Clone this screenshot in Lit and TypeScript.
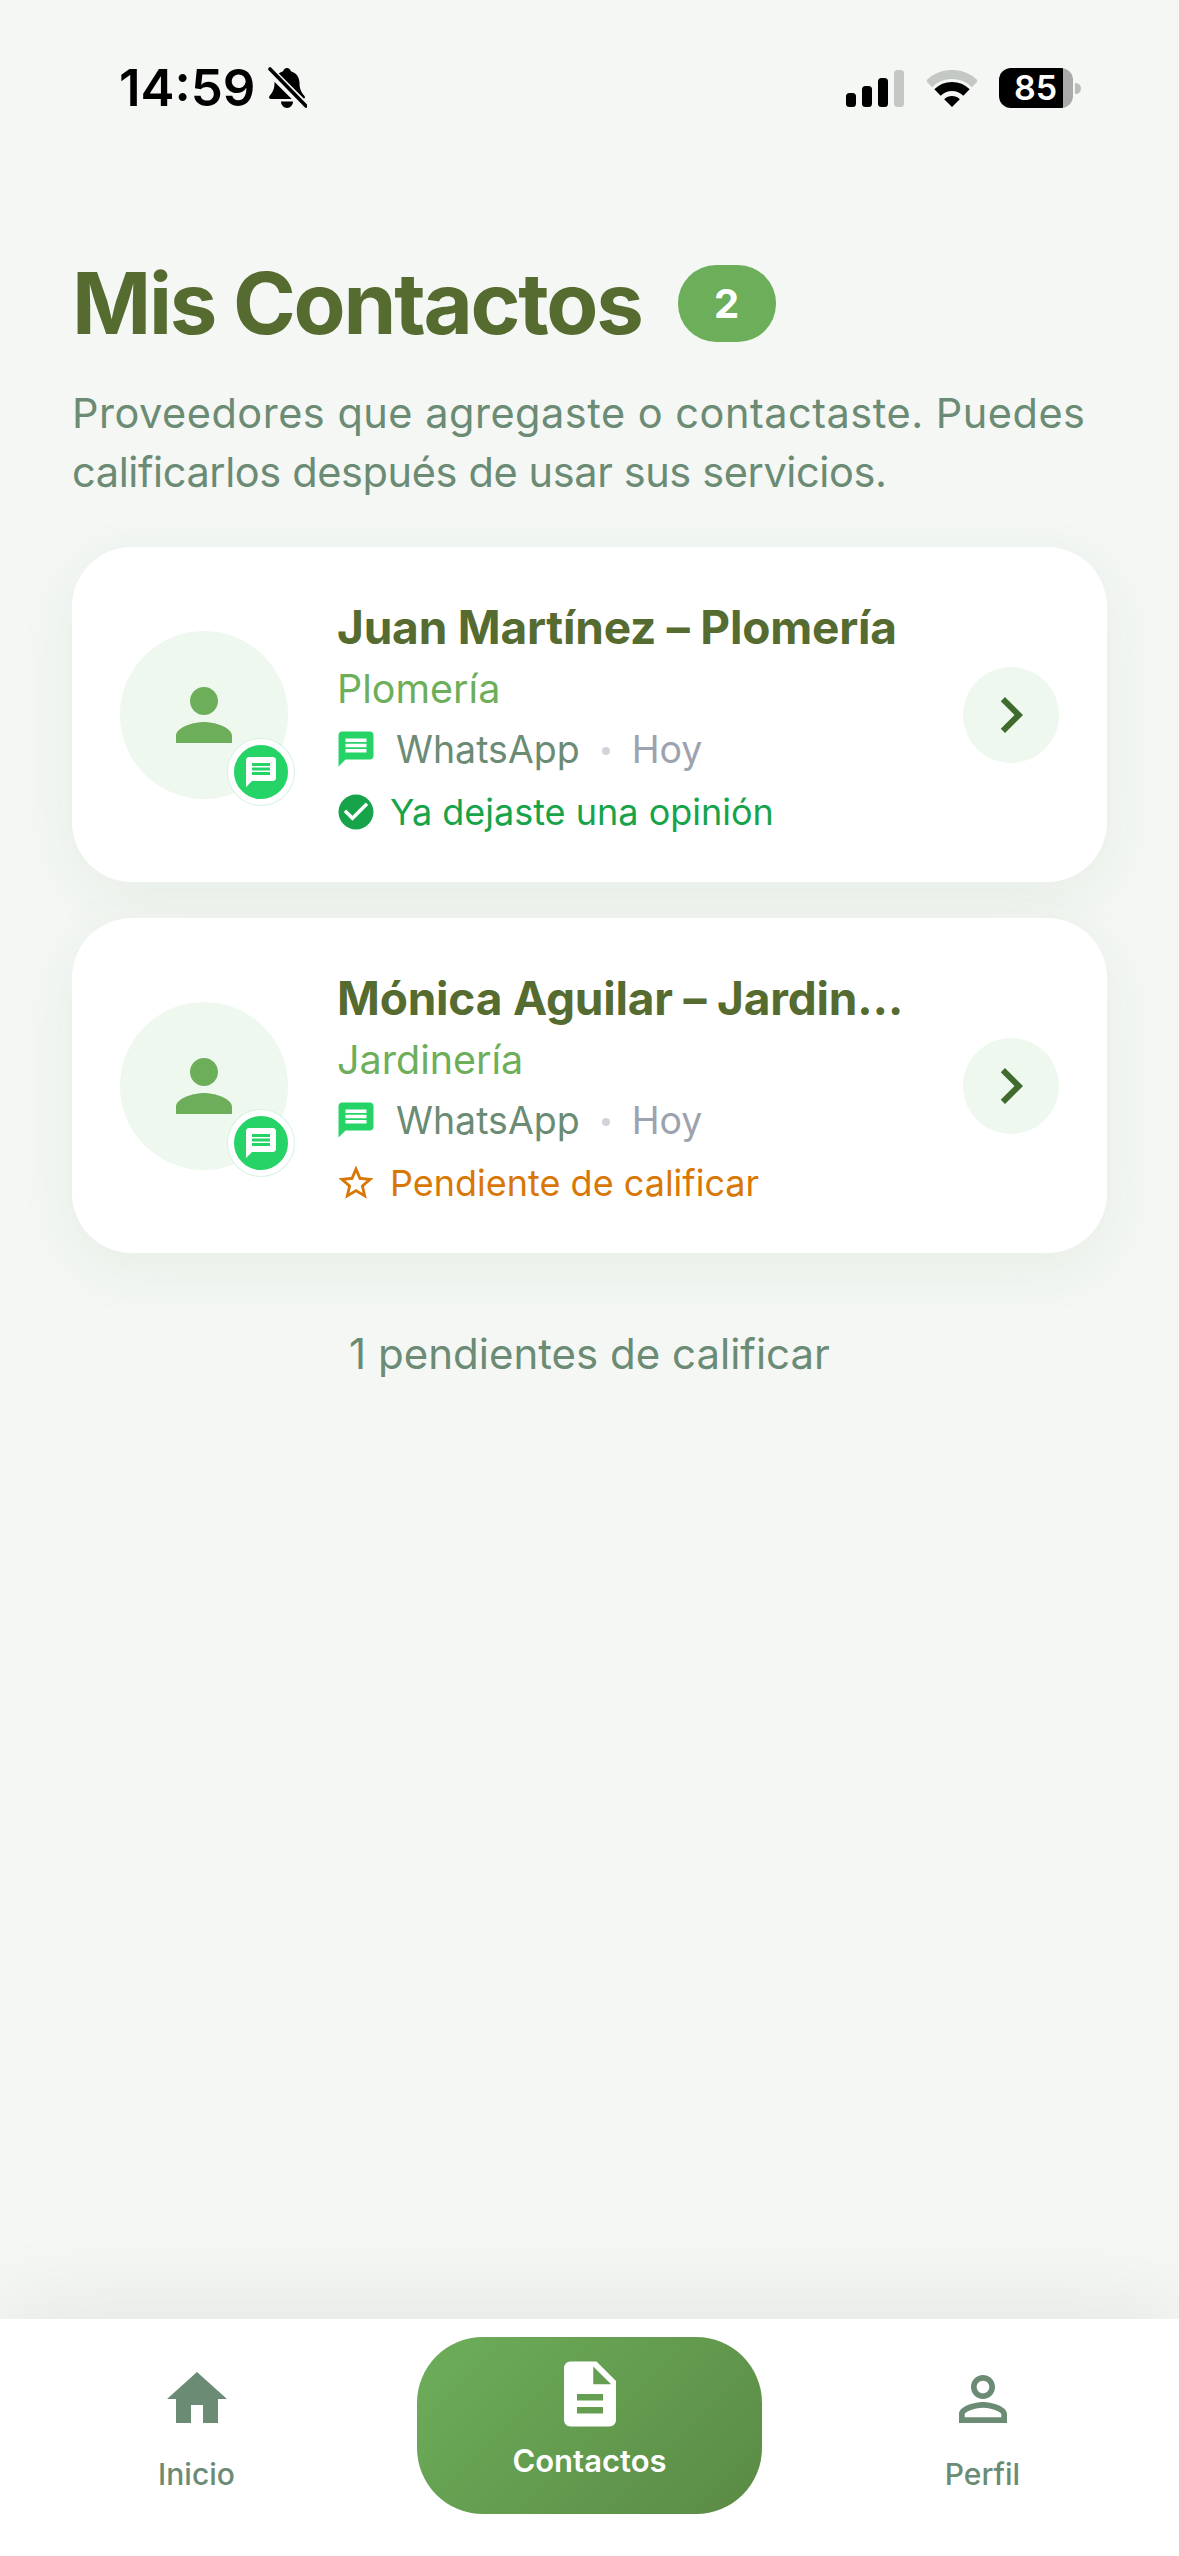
import { LitElement, html, css, svg } from 'lit';
import { customElement } from 'lit/decorators.js';

const ICONS = {
  person: svg`<path d="M12 12c2.21 0 4-1.79 4-4s-1.79-4-4-4-4 1.79-4 4 1.79 4 4 4zm0 2c-2.67 0-8 1.34-8 4v2h16v-2c0-2.66-5.33-4-8-4z"/>`,
  message: svg`<path d="M20 2H4c-1.1 0-1.99.9-1.99 2L2 22l4-4h14c1.1 0 2-.9 2-2V4c0-1.1-.9-2-2-2zm-2 12H6v-2h12v2zm0-3H6V9h12v2zm0-3H6V6h12v2z"/>`,
  check: svg`<path d="M12 2C6.48 2 2 6.48 2 12s4.48 10 10 10 10-4.48 10-10S17.52 2 12 2zm-2 15-5-5 1.41-1.41L10 14.17l7.59-7.59L19 8l-9 9z"/>`,
  star: svg`<path d="M22 9.24l-7.19-.62L12 2 9.19 8.63 2 9.24l5.46 4.73L5.82 21 12 17.27 18.18 21l-1.63-7.03L22 9.24zM12 15.4l-3.76 2.27 1-4.28-3.32-2.88 4.38-.38L12 6.1l1.71 4.04 4.38.38-3.32 2.88 1 4.28L12 15.4z"/>`,
  chevron: svg`<path d="M10 6L8.59 7.41 13.17 12l-4.58 4.59L10 18l6-6z"/>`,
  home: svg`<path d="M10 20v-6h4v6h5v-8h3L12 3 2 12h3v8z"/>`,
  description: svg`<path d="M14 2H6c-1.1 0-1.99.9-1.99 2L4 20c0 1.1.89 2 1.99 2H18c1.1 0 2-.9 2-2V8l-6-6zm2 16H8v-2h8v2zm0-4H8v-2h8v2zm-3-5V3.5L18.5 9H13z"/>`,
  personOutline: svg`<path d="M12 5.9c1.16 0 2.1.94 2.1 2.1s-.94 2.1-2.1 2.1S9.9 9.16 9.9 8s.94-2.1 2.1-2.1m0 9c2.97 0 6.1 1.46 6.1 2.1v1.1H5.9V17c0-.64 3.13-2.1 6.1-2.1M12 4C9.79 4 8 5.79 8 8s1.79 4 4 4 4-1.79 4-4-1.79-4-4-4zm0 9c-2.67 0-8 1.34-8 4v3h16v-3c0-2.66-5.33-4-8-4z"/>`,
};

const icon = (shape: unknown, cls: string) =>
  html`<svg class=${cls} viewBox="0 0 24 24" fill="currentColor">${shape}</svg>`;

const CONTACTS = [
  { name: 'Juan Martínez – Plomería', category: 'Plomería', rated: true },
  { name: 'Mónica Aguilar – Jardinería', category: 'Jardinería', rated: false },
];

@customElement('app-root')
export class AppRoot extends LitElement {
  static styles = css`
    :host {
      display: flex;
      flex-direction: column;
      height: 2556px;
      background: #f4f7f4;
      font-family: Inter, 'Noto Sans', sans-serif;
      overflow: hidden;
    }
    .status {
      display: flex;
      justify-content: space-between;
      align-items: center;
      padding: 60px 98px 0 119px;
      height: 56px;
    }
    .status-left,
    .status-right {
      display: flex;
      align-items: center;
    }
    .time {
      font-size: 51px;
      font-weight: 600;
      line-height: 56px;
      color: #000;
    }
    .bell {
      width: 40px;
      height: 42px;
      margin-left: 11px;
    }
    .signal {
      width: 58px;
      height: 37px;
    }
    .wifi {
      width: 50px;
      height: 37px;
      margin-left: 23px;
    }
    .battery {
      display: flex;
      align-items: center;
      margin-left: 22px;
    }
    .battery-body {
      width: 74px;
      height: 40px;
      border-radius: 12px;
      background: linear-gradient(90deg, #000 0 86.5%, #a9aba9 86.5%);
      color: #fff;
      font-size: 34px;
      font-weight: 600;
      line-height: 40px;
      padding-left: 15px;
      box-sizing: border-box;
    }
    .battery-cap {
      width: 6px;
      height: 11px;
      margin-left: 2px;
      border-radius: 0 6px 6px 0;
      background: #b9bcb9;
    }
    main {
      flex: 1;
      padding: 149px 72px 0;
    }
    .title-row {
      display: flex;
      align-items: center;
      gap: 36px;
    }
    h1 {
      margin: 0;
      font-size: 85px;
      line-height: 77px;
      font-weight: 700;
      color: #556b2f;
      letter-spacing: -2.25px;
    }
    .count {
      width: 98px;
      height: 77px;
      border-radius: 38px;
      background: #6dae5a;
      color: #fff;
      font-size: 40px;
      font-weight: 700;
      display: flex;
      align-items: center;
      justify-content: center;
    }
    .subtitle {
      margin: 42px 0 0;
      font-size: 41.5px;
      line-height: 59px;
      color: #6b8b74;
    }
    .subtitle span {
      display: block;
    }
    .line-a {
      letter-spacing: 0.5px;
    }
    .line-b {
      letter-spacing: -0.38px;
    }
    .list {
      display: flex;
      flex-direction: column;
      gap: 36px;
      margin-top: 45px;
    }
    .card {
      display: flex;
      align-items: center;
      height: 335px;
      box-sizing: border-box;
      padding: 0 48px;
      background: #fff;
      border-radius: 60px;
      box-shadow: 0 16px 60px rgba(60, 110, 60, 0.07);
    }
    .avatar {
      position: relative;
      flex: none;
      width: 168px;
      height: 168px;
      border-radius: 50%;
      background: #eef8ee;
      color: #6dae5a;
      display: flex;
      align-items: center;
      justify-content: center;
    }
    .i-person {
      width: 84px;
      height: 84px;
    }
    .channel-badge {
      position: absolute;
      right: -6px;
      bottom: -6px;
      width: 54px;
      height: 54px;
      border: 6px solid #fff;
      border-radius: 50%;
      background: #25d366;
      color: #fff;
      box-shadow: 0 0 0 1px #d5f3e0;
      display: flex;
      align-items: center;
      justify-content: center;
    }
    .i-badge {
      width: 36px;
      height: 36px;
    }
    .info {
      flex: 1;
      align-self: flex-start;
      min-width: 0;
      margin: 0 56px 0 49px;
      padding-top: 50px;
    }
    .name {
      font-size: 46px;
      line-height: 61px;
      font-weight: 700;
      letter-spacing: -0.2px;
      color: #556b2f;
      white-space: nowrap;
      overflow: hidden;
      text-overflow: ellipsis;
    }
    .category {
      font-size: 39.5px;
      line-height: 63px;
      color: #6dae5a;
    }
    .meta,
    .rating {
      display: flex;
      align-items: center;
    }
    .meta {
      height: 56px;
      font-size: 37.5px;
    }
    .i-channel {
      width: 42px;
      height: 42px;
      margin-left: -2px;
      color: #25d366;
    }
    .via {
      margin-left: 19px;
      color: #6b8b74;
    }
    .dot {
      width: 8px;
      height: 8px;
      margin: 4px 22px 0;
      border-radius: 50%;
      background: #d1d5db;
    }
    .when {
      color: #9ca3af;
    }
    .rating {
      height: 70px;
      font-size: 36px;
    }
    .rating.done {
      color: #16a34a;
    }
    .rating.pending {
      color: #d97706;
    }
    .i-rating {
      width: 42px;
      height: 42px;
      margin-left: -2px;
      margin-right: 13px;
    }
    .go {
      flex: none;
      width: 96px;
      height: 96px;
      border-radius: 50%;
      background: #eef8ee;
      color: #3f6b2c;
      display: flex;
      align-items: center;
      justify-content: center;
    }
    .i-go {
      width: 72px;
      height: 72px;
    }
    .pending-note {
      margin: 73px 0 0;
      text-align: center;
      font-size: 42px;
      line-height: 56px;
      color: #6b8b74;
    }
    nav {
      display: grid;
      grid-template-columns: repeat(3, 1fr);
      height: 237px;
      background: #fff;
      box-shadow: 0 -12px 90px rgba(0, 0, 0, 0.07);
    }
    .tab {
      display: flex;
      flex-direction: column;
      align-items: center;
      padding-top: 44px;
      font-size: 30px;
      font-weight: 500;
      line-height: 40px;
      color: #6b8b74;
    }
    .i-tab {
      width: 72px;
      height: 72px;
      margin-bottom: 19px;
    }
    .tab.active {
      height: 177px;
      box-sizing: border-box;
      margin: 18px 24px 0;
      padding-top: 18px;
      border-radius: 66px;
      background: linear-gradient(135deg, #6dae5a, #5a8a45);
      color: #fff;
      font-size: 31px;
      font-weight: 600;
    }
    .i-tab-active {
      width: 78px;
      height: 78px;
      margin-bottom: 8px;
    }
  `;

  private renderStatusBar() {
    return html`
      <div class="status">
        <div class="status-left">
          <span class="time">14:59</span>
          <svg class="bell" viewBox="0 0 40 42">
            <path d="M20 1c2 0 3.500 1.400 3.800 3.200 5.500 1.500 8.700 6 8.700 11.800 0 5.500 1.500 9 5 13 1 1.200.2 3-1.500 3H4c-1.700 0-2.500-1.800-1.500-3 3.500-4 5-7.500 5-13 0-5.800 3.200-10.300 8.700-11.800C16.500 2.400 18 1 20 1z"/>
            <path d="M14 34.500h12c0 3.500-2.600 6.500-6 6.500s-6-3-6-6.500z"/>
            <path d="M1 2l38 38" stroke="#f4f7f4" stroke-width="9"/>
            <path d="M3 2l36 37" stroke="#000" stroke-width="3.600" stroke-linecap="round"/>
          </svg>
        </div>
        <div class="status-right">
          <svg class="signal" viewBox="0 0 58 37">
            <rect x="0" y="23" width="10" height="14" rx="3.500"/>
            <rect x="16" y="16" width="10" height="21" rx="3.500"/>
            <rect x="32" y="8" width="10" height="29" rx="3.500"/>
            <rect x="48" y="0" width="10" height="37" rx="3.500" fill="#c4c8c4"/>
          </svg>
          <svg class="wifi" viewBox="0 0 50 37" fill="none">
            <path d="M2 14A32.500 32.500 0 0 1 48 14" stroke="#c4c8c4" stroke-width="9"/>
            <path d="M10.500 22.500A20.500 20.500 0 0 1 39.500 22.500" stroke="#000" stroke-width="9"/>
            <path d="M25 37L17.200 29.200A11 11 0 0 1 32.800 29.200Z" fill="#000"/>
          </svg>
          <div class="battery">
            <div class="battery-body">85</div>
            <div class="battery-cap"></div>
          </div>
        </div>
      </div>
    `;
  }

  private renderCard(c: { name: string; category: string; rated: boolean }) {
    return html`
      <div class="card">
        <div class="avatar">
          ${icon(ICONS.person, 'i-person')}
          <div class="channel-badge">${icon(ICONS.message, 'i-badge')}</div>
        </div>
        <div class="info">
          <div class="name">${c.name}</div>
          <div class="category">${c.category}</div>
          <div class="meta">
            ${icon(ICONS.message, 'i-channel')}
            <span class="via">WhatsApp</span>
            <span class="dot"></span>
            <span class="when">Hoy</span>
          </div>
          <div class="rating ${c.rated ? 'done' : 'pending'}">
            ${icon(c.rated ? ICONS.check : ICONS.star, 'i-rating')}
            <span>${c.rated ? 'Ya dejaste una opinión' : 'Pendiente de calificar'}</span>
          </div>
        </div>
        <div class="go">${icon(ICONS.chevron, 'i-go')}</div>
      </div>
    `;
  }

  render() {
    return html`
      ${this.renderStatusBar()}
      <main>
        <div class="title-row">
          <h1>Mis Contactos</h1>
          <span class="count">2</span>
        </div>
        <p class="subtitle">
          <span class="line-a">Proveedores que agregaste o contactaste. Puedes</span>
          <span class="line-b">calificarlos después de usar sus servicios.</span>
        </p>
        <div class="list">${CONTACTS.map((c) => this.renderCard(c))}</div>
        <p class="pending-note">1 pendientes de calificar</p>
      </main>
      <nav>
        <div class="tab">${icon(ICONS.home, 'i-tab')}<span>Inicio</span></div>
        <div class="tab active">${icon(ICONS.description, 'i-tab-active')}<span>Contactos</span></div>
        <div class="tab">${icon(ICONS.personOutline, 'i-tab')}<span>Perfil</span></div>
      </nav>
    `;
  }
}
